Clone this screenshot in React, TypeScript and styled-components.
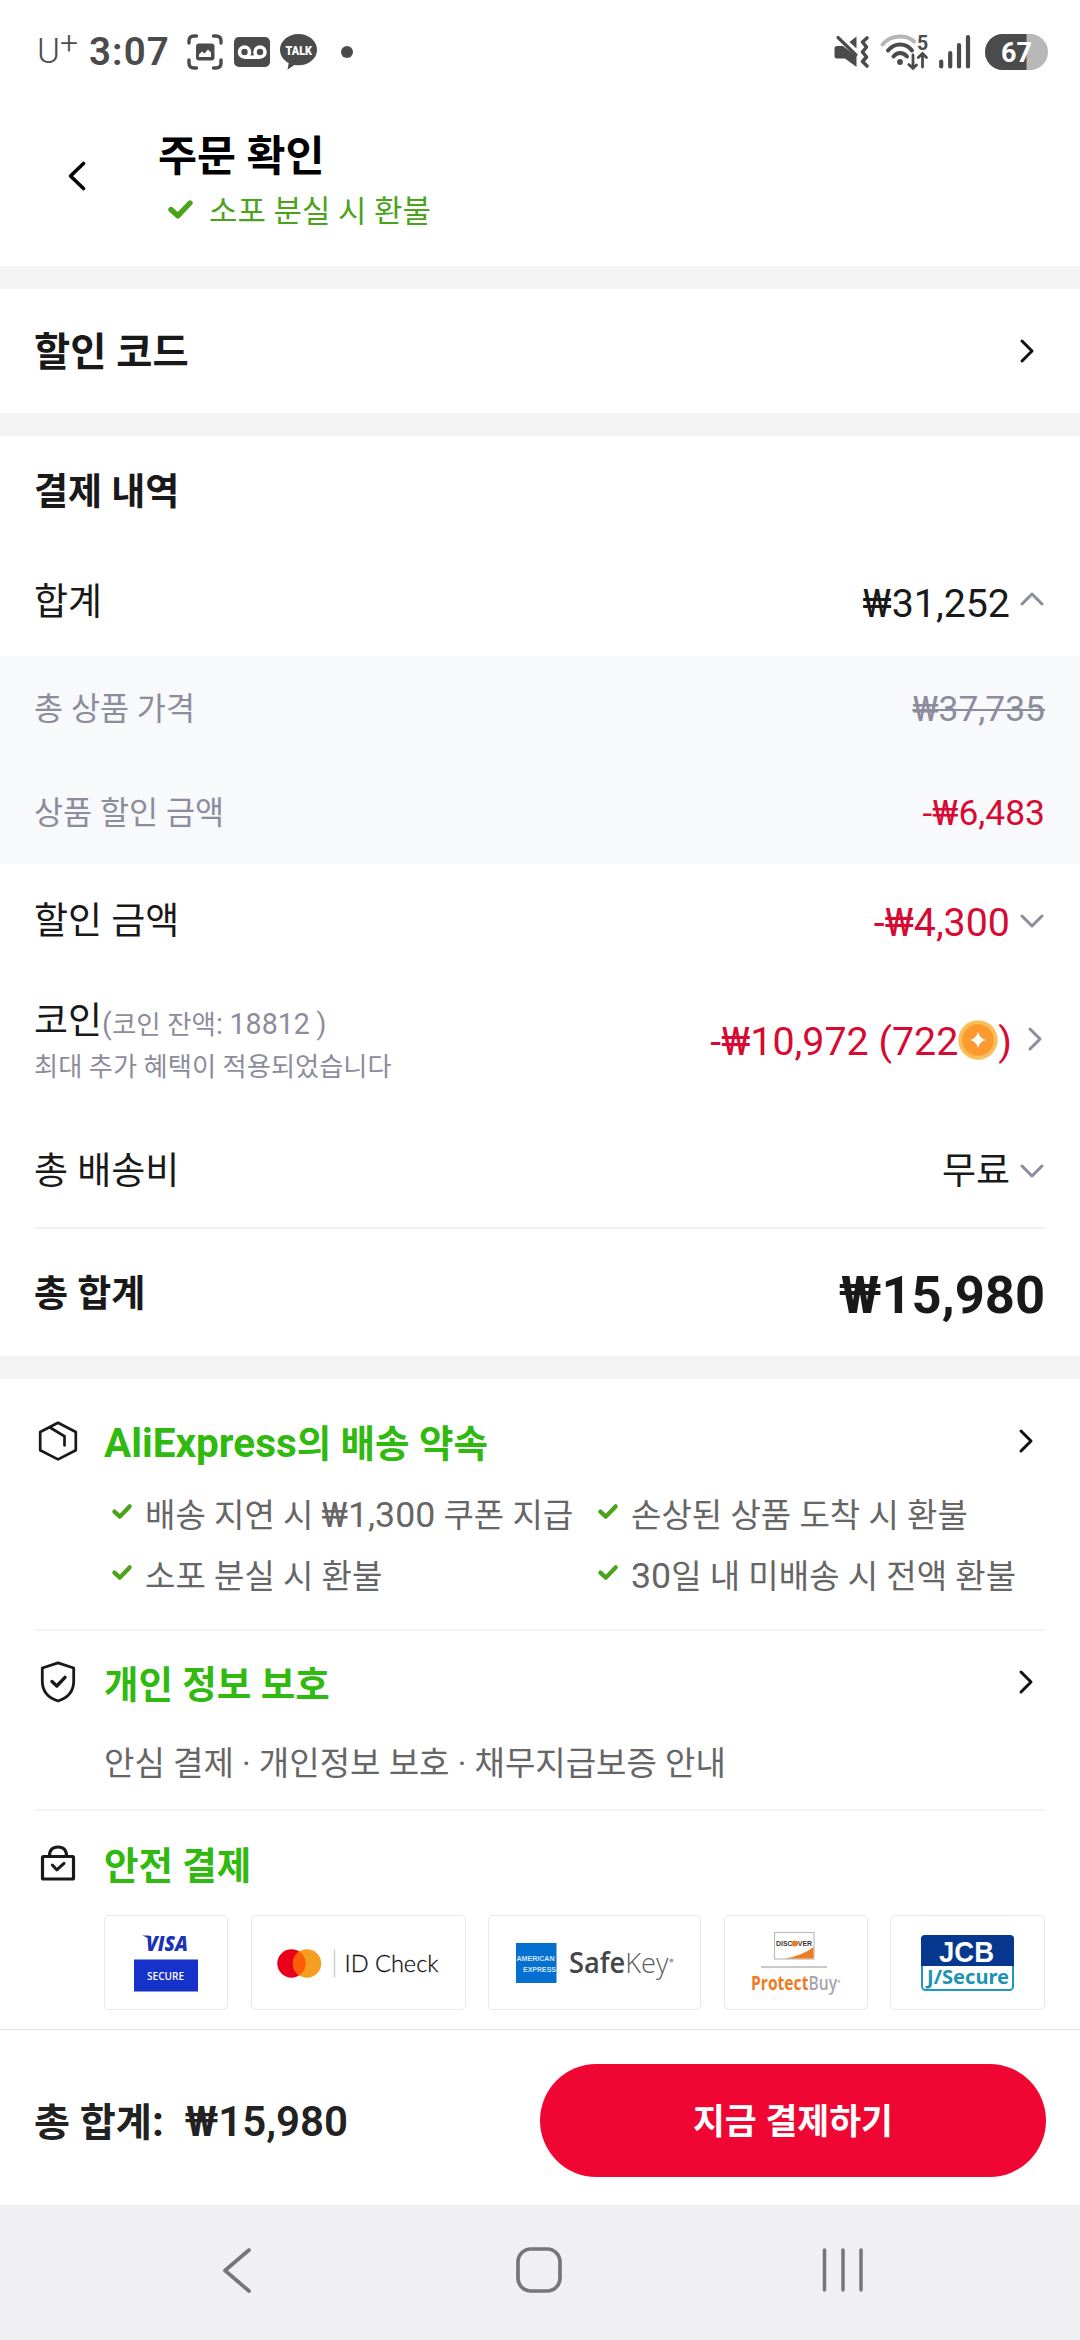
import React from 'react';
import styled, { createGlobalStyle } from 'styled-components';

const INK = '#191919';
const RED = '#d60a32';
const MUTED = '#8c8d9c';
const GREEN = '#30b90f';
const CHECK = '#4aa31b';
const STATUS = '#4b4b4b';
const NAV = '#767678';

const GlobalStyle = createGlobalStyle`
  * { box-sizing: border-box; }
  body {
    margin: 0;
    background: #fff;
    font-family: Roboto, 'Noto Sans CJK KR', sans-serif;
    color: ${INK};
  }
  svg { display: block; flex: none; overflow: visible; }
`;

const Screen = styled.div`
  width: 1080px;
  height: 2340px;
  display: flex;
  flex-direction: column;
  overflow: hidden;
  background: #fff;
`;

const TextBox = styled.span<{ $size: number; $weight?: number; $color?: string; $struck?: boolean }>`
  padding-top: 3px;
  font-size: ${(p) => p.$size}px;
  font-weight: ${(p) => p.$weight ?? 400};
  color: ${(p) => p.$color ?? INK};
  line-height: 1.2;
  white-space: pre;
  text-decoration: ${(p) => (p.$struck ? 'line-through 2px' : 'none')};
`;

/* Latin letters and digits run slightly larger than the Hangul beside them. */
const Latin = styled.span`
  font-size: 1.08em;
  line-height: 1;
`;

type TextProps = { size: number; weight?: number; color?: string; struck?: boolean; children: string };

const hasHangul = /[\uac00-\ud7a3]/;

const Text = ({ size, weight, color, struck, children }: TextProps) => (
  <TextBox $size={size} $weight={weight} $color={color} $struck={struck}>
    {hasHangul.test(children)
      ? children
          .split(/([A-Za-z0-9₩,:()]+)/)
          .map((run, i) => (i % 2 ? <Latin key={i}>{run}</Latin> : run))
      : children}
  </TextBox>
);

/* ---------- status bar ---------- */

const StatusBar = styled.div`
  height: 103px;
  flex: none;
  display: flex;
  align-items: center;
  justify-content: space-between;
  padding: 0 32px 0 37px;
`;

const StatusGroup = styled.div`
  display: flex;
  align-items: center;
`;

const Carrier = styled.div`
  display: flex;
  width: 52px;
  height: 42px;
  color: ${STATUS};
  font-weight: 300;
  line-height: 42px;
  font-size: 35px;
`;

const CarrierPlus = styled.span`
  font-size: 32px;
  line-height: 24px;
`;

const Clock = styled.span`
  width: 98px;
  font-size: 38.5px;
  font-weight: 600;
  line-height: 42px;
  letter-spacing: 1.1px;
  color: ${STATUS};
`;

const IconSlot = styled.span<{ $gap: number }>`
  display: flex;
  margin-right: ${(p) => p.$gap}px;
`;

/* ---------- header ---------- */

const Header = styled.header`
  height: 163px;
  flex: none;
  display: flex;
  padding-left: 66px;
`;

const BackButton = styled.div`
  width: 92px;
  padding-top: 57px;
`;

const Titles = styled.div`
  display: flex;
  flex-direction: column;
  padding-top: 26px;
`;

const Assurance = styled.div`
  display: flex;
  align-items: center;
  height: 54px;
  padding-left: 10px;
  gap: 16px;
`;

/* ---------- shared ---------- */

const Band = styled.div`
  height: 23px;
  flex: none;
  background: #f4f4f4;
`;

const Row = styled.div<{ $h: number; $right?: number; $top?: number; $bottom?: number }>`
  height: ${(p) => p.$h}px;
  flex: none;
  display: flex;
  align-items: center;
  justify-content: space-between;
  padding: ${(p) => p.$top ?? 0}px ${(p) => p.$right ?? 35}px ${(p) => p.$bottom ?? 0}px 34px;
`;

const Panel = styled.div`
  flex: none;
  background: #f8f9fb;
`;

const Amount = styled.div`
  display: flex;
  align-items: center;
`;

const AmountChevron = styled.span`
  margin-left: 16px;
  padding-bottom: 3px;
`;

const Valued = styled.div<{ $lift?: number }>`
  display: flex;
  align-items: center;
  gap: 10px;
  padding-right: 1px;
  svg { margin-bottom: ${(p) => p.$lift ?? 0}px; }
`;

const CoinLabel = styled.div`
  display: flex;
  flex-direction: column;
  gap: 5px;
`;

const CoinLine = styled.div`
  display: flex;
  align-items: baseline;
`;

const Divider = styled.div`
  height: 2px;
  flex: none;
  margin: 0 35px;
  background: #f2f2f3;
`;

/* ---------- guarantees ---------- */

const Guarantee = styled.section<{ $h: number }>`
  height: ${(p) => p.$h}px;
  flex: none;
  display: flex;
  flex-direction: column;
  padding: 0 35px;
`;

const GuaranteeHead = styled.div<{ $top: number }>`
  display: flex;
  align-items: center;
  height: 48px;
  margin-top: ${(p) => p.$top}px;
`;

const HeadIcon = styled.span`
  width: 69px;
  display: flex;
  padding: 0 0 4px 3px;
`;

const HeadChevron = styled.span`
  margin-left: auto;
  padding: 0 12px 5px 0;
`;

const PromiseGrid = styled.div`
  display: grid;
  grid-template-columns: 486px 1fr;
  grid-auto-rows: 61px;
  margin: 17px 0 0 77px;
`;

const PromiseItem = styled.div`
  display: flex;
  align-items: center;
  gap: 13px;
  svg { margin-bottom: 5px; }
`;

const Note = styled.div`
  display: flex;
  align-items: center;
  height: 48px;
  margin: 30px 0 0 69px;
`;

const Cards = styled.div`
  display: flex;
  justify-content: space-between;
  margin: 26px 0 0 69px;
`;

const Card = styled.div<{ $w: number }>`
  width: ${(p) => p.$w}px;
  height: 95px;
  border: 1.5px solid #e8e8ea;
  border-radius: 5px;
  display: flex;
  align-items: center;
  justify-content: center;
`;

/* ---------- bottom ---------- */

const PayBar = styled.footer`
  height: 176px;
  flex: none;
  display: flex;
  align-items: center;
  justify-content: space-between;
  padding: 6px 34px 0;
  border-top: 1px solid #e4e4e6;
`;

const PayTotal = styled.div`
  display: flex;
  align-items: baseline;
  gap: 21px;
`;

const PayButton = styled.button`
  width: 506px;
  height: 113px;
  padding: 2px 0 0;
  border: 0;
  border-radius: 57px;
  background: #f00633;
  font-family: inherit;
  display: flex;
  align-items: center;
  justify-content: center;
`;

const NavBar = styled.nav`
  height: 135px;
  flex: none;
  display: flex;
  align-items: center;
  justify-content: space-between;
  padding: 0 215px 5px 221px;
  background: #f0f0f2;
`;

/* ---------- icons ---------- */

type ChevronProps = { dir: 'up' | 'down' | 'right'; color?: string; w?: number };

const chevronPaths = {
  up: 'M2 12 L12 2 L22 12',
  down: 'M2 2 L12 12 L22 2',
  right: 'M2 2 L12 12 L2 22',
};

const Chevron = ({ dir, color = MUTED, w = 3 }: ChevronProps) => (
  <svg
    width={dir === 'right' ? 14 : 24}
    height={dir === 'right' ? 24 : 14}
    viewBox={dir === 'right' ? '0 0 14 24' : '0 0 24 14'}
    fill="none"
    stroke={color}
    strokeWidth={w}
    strokeLinecap="round"
    strokeLinejoin="round"
  >
    <path d={chevronPaths[dir]} />
  </svg>
);

const Check = ({ width = 20 }: { width?: number }) => (
  <svg width={width} height={width * 0.76} viewBox="0 0 25 19" fill="none" stroke={CHECK} strokeWidth="5.4" strokeLinecap="round" strokeLinejoin="round">
    <path d="M3 9.5 L9.8 15.8 L22 3" />
  </svg>
);

const CaptureIcon = () => (
  <svg width="36" height="36" viewBox="0 0 36 36" fill="none" stroke={STATUS} strokeWidth="3.4" strokeLinecap="round">
    <path d="M2 9 V7 Q2 2 7 2 H9.5 M26.5 2 H29 Q34 2 34 7 V9 M34 26 V29 Q34 34 29 34 H26.5 M9.5 34 H7 Q2 34 2 29 V26" />
    <rect x="9" y="9.5" width="18.5" height="17" rx="3" fill={STATUS} stroke="none" />
    <path d="M12 23 V20.5 L15 17.5 L17.5 19.5 L21 15.5 L24 18.5 V23 Z" fill="#fff" stroke="none" />
  </svg>
);

const VoicemailIcon = () => (
  <svg width="36" height="30" viewBox="0 0 36 30">
    <rect width="36" height="30" rx="5" fill={STATUS} />
    <g fill="none" stroke="#fff" strokeWidth="3.6">
      <circle cx="10.5" cy="15" r="5" />
      <circle cx="26" cy="15" r="5" />
      <path d="M10.5 20.2 H26" />
    </g>
  </svg>
);

const TalkIcon = () => (
  <svg width="37" height="36" viewBox="0 0 37 36">
    <path d="M18.5 0 C28.7 0 37 7 37 15.7 C37 24.5 28.7 31.3 18.5 31.3 C17 31.3 15.6 31.2 14.2 30.9 L7.5 35.7 L8.7 29 C3.4 26.2 0 21.3 0 15.7 C0 7 8.3 0 18.5 0 Z" fill={STATUS} />
    <text x="5.5" y="21" fontFamily="Roboto" fontWeight="900" fontSize="13.5" fill="#fff" textLength="26.5" lengthAdjust="spacingAndGlyphs">TALK</text>
  </svg>
);

const MuteIcon = () => (
  <svg width="36" height="34" viewBox="0 0 36 34">
    <path d="M3 11 H9 L22.5 21.5 V32 L11 23.5 H3 Q0.5 23.5 0.5 21 V13.5 Q0.5 11 3 11 Z" fill={STATUS} />
    <path d="M22.5 1.5 V13.5 L15.5 7 Z" fill={STATUS} />
    <path d="M4 2.5 L22 20" stroke={STATUS} strokeWidth="3.2" strokeLinecap="round" />
    <path d="M33 3 L28.5 7 L32.5 12 L28.5 17 L32.5 22 L28.5 26.5 L33 31" fill="none" stroke={STATUS} strokeWidth="3.6" strokeLinecap="round" strokeLinejoin="round" />
  </svg>
);

const WifiIcon = () => (
  <svg width="48" height="36" viewBox="0 0 48 36" fill="none" strokeLinecap="round">
    <path d="M2.5 10.5 Q9 2.5 20 2.5 Q29 2.5 34 7.5" stroke="#b6b6b6" strokeWidth="4" />
    <path d="M8 16.5 Q13 10.5 20 10.5 Q27.5 10.5 32 16.5" stroke={STATUS} strokeWidth="4" />
    <path d="M13.5 22.5 Q16.5 19 20 19 Q24 19 27 22.5" stroke={STATUS} strokeWidth="4" />
    <circle cx="20" cy="28" r="2.9" fill={STATUS} />
    <path d="M33 21 V34 M28.8 30.5 L33 34.3 L36.5 31 M42.5 33 V20.5 M38.3 23.5 L42.5 19.5 L46.5 23.5" stroke={STATUS} strokeWidth="2.8" />
    <text x="37" y="15.5" fontFamily="Roboto" fontWeight="700" fontSize="19.5" fill={STATUS}>5</text>
  </svg>
);

const SignalIcon = () => (
  <svg width="32" height="35" viewBox="0 0 32 35" stroke={STATUS} strokeWidth="4.2" strokeLinecap="round">
    <path d="M2.2 27.5 V32.5 M11.2 19 V32.5 M20 11 V32.5 M29 3 V32.5" />
  </svg>
);

const BatteryIcon = () => (
  <svg width="63" height="36" viewBox="0 0 63 36">
    <defs>
      <clipPath id="pill"><rect width="63" height="36" rx="18" /></clipPath>
    </defs>
    <g clipPath="url(#pill)">
      <rect width="63" height="36" fill="#b8b8b8" />
      <rect width="41.5" height="36" fill={STATUS} />
    </g>
    <text x="16" y="27.8" fontFamily="Roboto" fontWeight="700" fontSize="27.5" fill="#fff" textLength="31" lengthAdjust="spacingAndGlyphs">67</text>
  </svg>
);

const CoinIcon = () => (
  <svg width="40" height="40" viewBox="0 0 40 40">
    <circle cx="20" cy="20" r="19.7" fill="#f9bf5b" />
    <circle cx="20" cy="20" r="15.8" fill="#fd9a2f" />
    <path d="M20 12 Q21.6 18.4 28 20 Q21.6 21.6 20 28 Q18.4 21.6 12 20 Q18.4 18.4 20 12 Z" fill="#fff" />
  </svg>
);

const BoxIcon = () => (
  <svg width="40" height="40" viewBox="0 0 40 40" fill="none" stroke={INK} strokeWidth="2.7" strokeLinejoin="round" strokeLinecap="round">
    <path d="M20 1.8 L37.8 11 V29.2 L20 38.4 L2.2 29.2 V11 Z" />
    <path d="M12 6.5 L26.5 15.3 V24.5" strokeLinejoin="miter" />
  </svg>
);

const ShieldIcon = () => (
  <svg width="40" height="42" viewBox="0 0 40 42" fill="none" stroke={INK} strokeWidth="2.8" strokeLinejoin="round" strokeLinecap="round">
    <path d="M20 1.8 L35.7 7 V20 Q35.7 35 20 40 Q4.3 35 4.3 20 V7 Z" />
    <path d="M14 20.5 L18.8 25 L27 16.3" strokeWidth="3.4" />
  </svg>
);

const LockIcon = () => (
  <svg width="40" height="36" viewBox="0 0 40 36" fill="none" stroke={INK} strokeWidth="3.2" strokeLinejoin="round" strokeLinecap="round">
    <rect x="4.5" y="11.5" width="31" height="22.5" rx="1" />
    <path d="M11.5 11 Q11.5 2 20 2 Q28.5 2 28.5 11" />
    <path d="M14.3 20 L18.8 24.8 L26 18.3" strokeWidth="3" />
  </svg>
);

const VisaLogo = () => (
  <svg width="64" height="58" viewBox="0 0 64 58">
    <path d="M8 1.500 H15 L17 7 Q14 3 8 1.5 Z" fill="#1b33b5" />
    <text x="12" y="16.5" fontFamily="Open Sans" fontStyle="italic" fontWeight="800" fontSize="21" fill="#1b33b5" textLength="42" lengthAdjust="spacingAndGlyphs">VISA</text>
    <rect y="25.500" width="64" height="32" fill="#1731cb" />
    <text x="13" y="45.5" fontFamily="Open Sans" fontWeight="600" fontSize="11.5" fill="#fff" textLength="37" lengthAdjust="spacingAndGlyphs">SECURE</text>
  </svg>
);

const IdCheckLogo = () => (
  <svg width="162" height="30" viewBox="0 0 162 30">
    <circle cx="14.5" cy="15.5" r="14.2" fill="#e9001b" />
    <circle cx="30" cy="15.5" r="14.2" fill="#f59e20" />
    <path d="M22.250 3.600 A14.200 14.200 0 0 1 22.250 27.400 A14.200 14.200 0 0 1 22.250 3.600 Z" fill="#fc5c05" />
    <path d="M57.5 1.5 V29.5" stroke="#cfcfcf" strokeWidth="1.500" />
    <text x="67.5" y="23.5" fontFamily="Lato" fontWeight="300" fontSize="24" fill="#111" stroke="#111" strokeWidth="0.3" textLength="94" lengthAdjust="spacingAndGlyphs">ID Check</text>
  </svg>
);

const SafeKeyLogo = () => (
  <svg width="160" height="42" viewBox="0 0 160 42">
    <rect x="1" y="1" width="40.500" height="40" fill="#0670d0" />
    <text x="1.500" y="19.3" fontFamily="Liberation Sans" fontWeight="700" fontSize="7.5" fill="#cfe5f8" textLength="38" lengthAdjust="spacingAndGlyphs">AMERICAN</text>
    <text x="8" y="29.5" fontFamily="Liberation Sans" fontWeight="700" fontSize="7.5" fill="#cfe5f8" textLength="33" lengthAdjust="spacingAndGlyphs">EXPRESS</text>
    <text x="54" y="30.5" fontFamily="Open Sans" fontWeight="600" fontSize="28" fill="#46464a" textLength="99.5" lengthAdjust="spacingAndGlyphs">
      Safe<tspan fontWeight="300" fill="#5d5e62">Key</tspan>
    </text>
    <circle cx="156.5" cy="18.5" r="2" fill="#a5a5a8" />
  </svg>
);

const ProtectBuyLogo = () => (
  <svg width="90" height="64" viewBox="0 0 90 64">
    <rect x="23.5" y="1.5" width="39.5" height="26.5" fill="#fff" stroke="#bdbdbd" strokeWidth="1.2" />
    <path d="M62.5 16 V27.5 H34 Q52 24.5 62.5 16 Z" fill="#ee7b22" />
    <text x="25" y="15.3" fontFamily="Liberation Sans" fontWeight="700" fontSize="8" fill="#3a3433" textLength="36" lengthAdjust="spacingAndGlyphs">DISCOVER</text>
    <circle cx="43.7" cy="12.5" r="2.9" fill="#ee7b22" />
    <path d="M10 36 H76" stroke="#b9b9bd" strokeWidth="1.4" />
    <text x="0" y="58.5" fontFamily="Open Sans" fontWeight="700" fontSize="19" fill="#ee7b22" textLength="86" lengthAdjust="spacingAndGlyphs">
      Protect<tspan fontWeight="600" fill="#a7a5ab">Buy</tspan>
    </text>
    <circle cx="88" cy="50.5" r="1.3" fill="#b9b9bd" />
  </svg>
);

const JcbLogo = () => (
  <svg width="93" height="56" viewBox="0 0 93 56">
    <rect x="1" y="1" width="91" height="54" rx="3.5" fill="#fff" stroke="#1c9cba" strokeWidth="2" />
    <path d="M0 31 V4 Q0 0 4 0 H89 Q93 0 93 4 V31 Z" fill="#06388f" />
    <text x="18" y="26.5" fontFamily="Liberation Sans" fontWeight="700" fontSize="30" fill="#fff" textLength="55" lengthAdjust="spacingAndGlyphs">JCB</text>
    <text x="6" y="48.500" fontFamily="Noto Sans" fontWeight="700" fontSize="19" fill="#1c93b3" textLength="82" lengthAdjust="spacingAndGlyphs">J/Secure</text>
  </svg>
);

/* ---------- page ---------- */

const promises = ['배송 지연 시 ₩1,300 쿠폰 지급', '손상된 상품 도착 시 환불', '소포 분실 시 환불', '30일 내 미배송 시 전액 환불'];

const SectionTitle = ({ children }: { children: string }) => (
  <Text size={37.5} weight={700} color={GREEN}>{children}</Text>
);

export default function App() {
  return (
    <Screen>
      <GlobalStyle />
      <StatusBar>
        <StatusGroup>
          <Carrier>U<CarrierPlus>+</CarrierPlus></Carrier>
          <Clock>3:07</Clock>
          <IconSlot $gap={11}><CaptureIcon /></IconSlot>
          <IconSlot $gap={10}><VoicemailIcon /></IconSlot>
          <IconSlot $gap={24}><TalkIcon /></IconSlot>
          <svg width="12" height="12" viewBox="0 0 12 12"><circle cx="6" cy="6" r="6" fill={STATUS} /></svg>
        </StatusGroup>
        <StatusGroup>
          <IconSlot $gap={10}><MuteIcon /></IconSlot>
          <IconSlot $gap={11}><WifiIcon /></IconSlot>
          <IconSlot $gap={14}><SignalIcon /></IconSlot>
          <BatteryIcon />
        </StatusGroup>
      </StatusBar>

      <Header>
        <BackButton>
          <svg width="22" height="32" viewBox="0 0 22 32" fill="none" stroke="#000" strokeWidth="3.6" strokeLinecap="round" strokeLinejoin="round">
            <path d="M17.5 3.5 L4.5 16 L17.5 28.5" />
          </svg>
        </BackButton>
        <Titles>
          <Text size={42.4} weight={700} color="#000">주문 확인</Text>
          <Assurance>
            <Check width={25} />
            <Text size={30.9} color={CHECK}>소포 분실 시 환불</Text>
          </Assurance>
        </Titles>
      </Header>
      <Band />

      <Row $h={124} $right={46}>
        <Text size={39.375} weight={700}>할인 코드</Text>
        <Chevron dir="right" color="#111" />
      </Row>
      <Band />

      <Row $h={112}><Text size={37} weight={700}>결제 내역</Text></Row>
      <Row $h={108}>
        <Text size={37}>합계</Text>
        <Valued $lift={6}><Text size={39.375}>₩31,252</Text><Chevron dir="up" /></Valued>
      </Row>
      <Panel>
        <Row $h={104}>
          <Text size={31.6} color={MUTED}>총 상품 가격</Text>
          <Text size={35.4} color={MUTED} struck>₩37,735</Text>
        </Row>
        <Row $h={104}>
          <Text size={31.6} color={MUTED}>상품 할인 금액</Text>
          <Text size={35.4} color={RED}>-₩6,483</Text>
        </Row>
      </Panel>
      <Row $h={114}>
        <Text size={37}>할인 금액</Text>
        <Valued><Text size={39.375} color={RED}>-₩4,300</Text><Chevron dir="down" /></Valued>
      </Row>
      <Row $h={135} $right={38} $bottom={11}>
        <CoinLabel>
          <CoinLine>
            <Text size={37}>코인</Text>
            <Text size={26.5} color={MUTED}>(코인 잔액: 18812 )</Text>
          </CoinLine>
          <Text size={26.25} color={MUTED}>최대 추가 혜택이 적용되었습니다</Text>
        </CoinLabel>
        <Amount>
          <Text size={39.375} color={RED}>-₩10,972 (722</Text>
          <CoinIcon />
          <Text size={39.375} color={RED}>)</Text>
          <AmountChevron><Chevron dir="right" /></AmountChevron>
        </Amount>
      </Row>
      <Row $h={114} $top={2}>
        <Text size={37}>총 배송비</Text>
        <Valued><Text size={37}>무료</Text><Chevron dir="down" /></Valued>
      </Row>
      <Divider />
      <Row $h={127} $top={2}>
        <Text size={37} weight={700}>총 합계</Text>
        <Text size={52.5} weight={700}>₩15,980</Text>
      </Row>
      <Band />

      <Guarantee $h={250}>
        <GuaranteeHead $top={40}>
          <HeadIcon><BoxIcon /></HeadIcon>
          <SectionTitle>AliExpress의 배송 약속</SectionTitle>
          <HeadChevron><Chevron dir="right" color="#111" /></HeadChevron>
        </GuaranteeHead>
        <PromiseGrid>
          {promises.map((p) => (
            <PromiseItem key={p}>
              <Check />
              <Text size={33.05} color="#666">{p}</Text>
            </PromiseItem>
          ))}
        </PromiseGrid>
      </Guarantee>
      <Divider />
      <Guarantee $h={178}>
        <GuaranteeHead $top={29}>
          <HeadIcon><ShieldIcon /></HeadIcon>
          <SectionTitle>개인 정보 보호</SectionTitle>
          <HeadChevron><Chevron dir="right" color="#111" /></HeadChevron>
        </GuaranteeHead>
        <Note><Text size={33.05} color="#666">안심 결제 · 개인정보 보호 · 채무지급보증 안내</Text></Note>
      </Guarantee>
      <Divider />
      <Guarantee $h={218}>
        <GuaranteeHead $top={30}>
          <HeadIcon><LockIcon /></HeadIcon>
          <SectionTitle>안전 결제</SectionTitle>
        </GuaranteeHead>
        <Cards>
          <Card $w={124}><VisaLogo /></Card>
          <Card $w={215}><IdCheckLogo /></Card>
          <Card $w={213}><SafeKeyLogo /></Card>
          <Card $w={144}><ProtectBuyLogo /></Card>
          <Card $w={155}><JcbLogo /></Card>
        </Cards>
      </Guarantee>

      <PayBar>
        <PayTotal>
          <Text size={39.2} weight={700} color="#222">총 합계:</Text>
          <Text size={42} weight={600} color="#222">₩15,980</Text>
        </PayTotal>
        <PayButton><Text size={34.7} weight={700} color="#fff">지금 결제하기</Text></PayButton>
      </PayBar>
      <NavBar>
        <svg width="32" height="48" viewBox="0 0 32 48" fill="none" stroke={NAV} strokeWidth="3.7" strokeLinecap="round" strokeLinejoin="round">
          <path d="M28 4 L4 24.5 L28 45" />
        </svg>
        <svg width="51" height="48" viewBox="-3 0 51 48" fill="none" stroke={NAV} strokeWidth="3.7">
          <rect x="3" y="3" width="42" height="42" rx="13" />
        </svg>
        <svg width="44" height="46" viewBox="0 0 44 46" fill="none" stroke={NAV} strokeWidth="3.5" strokeLinecap="round">
          <path d="M3.5 3 V43 M22 3 V43 M40 3 V43" />
        </svg>
      </NavBar>
    </Screen>
  );
}
